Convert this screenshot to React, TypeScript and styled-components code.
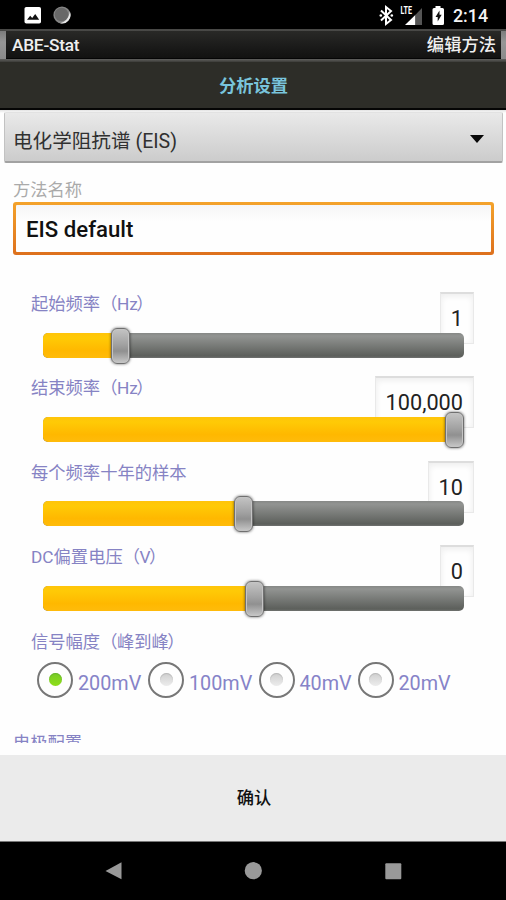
import React from "react";
import styled, { createGlobalStyle } from "styled-components";

const GlobalStyle = createGlobalStyle`
  *, *::before, *::after { box-sizing: border-box; }
  html, body { margin: 0; padding: 0; background: #000; }
  body { font-family: Roboto, "Noto Sans CJK SC", sans-serif; overflow: hidden; }
`;

const Screen = styled.div`
  display: flex;
  flex-direction: column;
  width: 506px;
  height: 900px;
  background: #fefefe;
  overflow: hidden;
`;

const StatusBar = styled.header`
  display: flex;
  flex: none;
  justify-content: space-between;
  height: 29px;
  background: #000;
  color: #f4f4f4;
`;

const TitleFrame = styled.div`
  flex: none;
  height: 33px;
  padding: 2px 0 3px;
  background: linear-gradient(#484846, #50504e 80%, #5c5c5a 92%, #3c3c39);
`;

const TitleSides = styled.div`
  height: 28px;
  padding: 0 5px 0 6px;
  background: linear-gradient(#7c7c7c, #969696 40%, #8a8a8a);
`;

const TitleBar = styled.div`
  display: flex;
  align-items: center;
  justify-content: space-between;
  height: 28px;
  padding: 0 5px 0 6px;
  border-bottom: 1px solid #050505;
  background: linear-gradient(#292927, #191918 65%, #121211);
  color: #efefef;
  font-weight: 500;
  line-height: 28px;
`;

const AppName = styled.span`
  font-size: 17.3px;
  letter-spacing: -0.25px;
`;

const ScreenName = styled.span`
  font-size: 17.3px;
`;

const SectionHeader = styled.h1`
  flex: none;
  height: 48px;
  margin: 0;
  padding: 1px 0 0 1px;
  border-bottom: 2px solid #050505;
  background: #2d2d28;
  color: #79c4dc;
  font-size: 17.3px;
  font-weight: 700;
  line-height: 46px;
  text-align: center;
`;

const Content = styled.main`
  display: flex;
  flex-direction: column;
  flex: none;
  height: 633px;
  padding-top: 2px;
  overflow: hidden;
  background: linear-gradient(#e2e2e2, #fefefe 3px);
`;

const Picker = styled.div`
  display: flex;
  flex: none;
  align-items: center;
  justify-content: space-between;
  height: 51px;
  margin: 0 3px 0 4px;
  padding: 4px 18px 0 8px;
  border: 1px solid #c2c2c2;
  border-top-color: #e2e2e2;
  border-bottom: 2px solid #a2a2a2;
  border-radius: 2px;
  background: linear-gradient(#e9e9e9, #cccccc);
  color: #303030;
  font-size: 19.6px;
`;

const FieldLabel = styled.label`
  flex: none;
  height: 39px;
  padding: 15px 0 0 13px;
  color: #aaaaaa;
  font-size: 17.3px;
  line-height: 25px;
`;

const NameFrame = styled.div`
  flex: none;
  height: 53px;
  margin: 0 12px 0 13px;
  padding: 3px;
  border-radius: 3px;
  background: linear-gradient(#f4a32b, #dd701d);
`;

const NameInput = styled.input`
  display: block;
  width: 100%;
  height: 47px;
  padding: 0 10px;
  border: 0;
  outline: 0;
  border-radius: 1px;
  background: linear-gradient(#f6f6f6, #fefefe 35%);
  color: #111;
  font: 500 22.2px Roboto, sans-serif;
`;

const Controls = styled.section`
  flex: none;
  padding: 37px 32px 0 31px;
`;

const SliderGroup = styled.div`
  height: 84.4px;
`;

const SliderHead = styled.div`
  display: flex;
  align-items: flex-start;
  justify-content: space-between;
  height: 40.5px;
`;

const PurpleLabel = styled.span`
  display: block;
  color: #8683c4;
  font-size: 17.3px;
  line-height: 24px;
`;

const OpenParen = styled.span`
  letter-spacing: -0.5px;
`;

const CloseParen = styled.span`
  margin-left: -1.6px;
`;

const ValueBox = styled.output`
  height: 52px;
  min-width: 34px;
  padding: 0 10px;
  border: 1px solid #e9e9e9;
  border-top: 2px solid #dddddd;
  background: #fefefe;
  box-shadow: inset 0 2px 6px #ececec;
  color: #222;
  font-size: 21.7px;
  line-height: 49px;
  text-align: right;
`;

const Track = styled.div`
  position: relative;
  height: 25px;
  margin: 0 10px 0 12px;
  border-radius: 5px;
  background: linear-gradient(#868886, #929492 12%, #5c5f5b 92%, #707270);
`;

const Fill = styled.div`
  height: 25px;
  border-radius: 5px 0 0 5px;
  background: linear-gradient(#ffc40a, #ffca06 20%, #ffb800 70%, #ffbb0b);
`;

const Thumb = styled.div`
  position: absolute;
  top: -5px;
  width: 19px;
  height: 36px;
  margin-left: -9.5px;
  border: 1px solid #707070;
  border-radius: 6px;
  background: linear-gradient(#c4c4c4, #a2a2a2 45%, #909090 65%, #c8c8c8);
  box-shadow: inset 0 0 0 1px #c4c4c4, 0 0 3px rgba(0, 0, 0, 0.6);
`;

const RadioHeading = styled.div`
  height: 32px;
`;

const RadioRow = styled.div`
  display: flex;
  padding-left: 6px;
`;

const RadioItem = styled.label<{ $width: number }>`
  display: flex;
  flex: none;
  align-items: center;
  gap: 5px;
  width: ${(p) => p.$width}px;
  height: 36px;
  color: #8683c8;
  font-size: 19.8px;
  white-space: nowrap;
`;

const RadioText = styled.span`
  padding-top: 7px;
`;

const RadioRing = styled.i`
  display: flex;
  flex: none;
  align-items: center;
  justify-content: center;
  width: 36px;
  height: 36px;
  border: 2px solid #777;
  border-radius: 50%;
  background: #fefefe;
`;

const RadioDot = styled.i<{ $on?: boolean }>`
  width: 13px;
  height: 13px;
  border-radius: 50%;
  background: ${(p) => (p.$on ? "linear-gradient(#78cc28, #8ede18)" : "linear-gradient(#cfcfcf, #ececec)")};
  box-shadow: inset 0 1px 1px ${(p) => (p.$on ? "#68b32c" : "#b8b8b8")};
`;

const NextHeading = styled.div`
  flex: none;
  height: 12px;
  margin-top: 33px;
  padding-left: 13px;
  overflow: hidden;
`;

const ConfirmButton = styled.button`
  flex: none;
  height: 87px;
  margin-top: 12px;
  padding: 0 0 3px 2px;
  border: 0;
  border-bottom: 1px solid #777;
  background: #ebebeb;
  color: #111;
  font: 500 17.3px Roboto, "Noto Sans CJK SC", sans-serif;
`;

const NavBar = styled.nav`
  flex: 1;
  background: #000;
`;

const SLIDERS = [
  { label: "起始频率", unit: "Hz", value: "1", at: 77.5 },
  { label: "结束频率", unit: "Hz", value: "100,000", at: 411.5 },
  { label: "每个频率十年的样本", value: "10", at: 200 },
  { label: "DC偏置电压", unit: "V", value: "0", at: 211.5 },
];

const RADIOS = [
  { label: "200mV", width: 111, on: true },
  { label: "100mV", width: 110.5, on: false },
  { label: "40mV", width: 99, on: false },
  { label: "20mV", width: 96, on: false },
];

function SettingLabel({ name, unit }: { name: string; unit?: string }) {
  return (
    <PurpleLabel>
      {name}
      {unit && (
        <>
          <OpenParen>（</OpenParen>
          {unit}
          <CloseParen>）</CloseParen>
        </>
      )}
    </PurpleLabel>
  );
}

function NotificationIcons() {
  return (
    <svg width="100" height="29" viewBox="0 0 100 29">
      <rect x="24.5" y="7" width="16.5" height="16.5" rx="1.8" fill="#fff" />
      <path d="M27 19.8l3.2-4 2 2.3 3-4.1 4 5.8z" fill="#111" />
      <circle cx="62" cy="15" r="8.6" fill="#858585" />
      <path d="M69.8 11.5A8.6 8.6 0 0 1 60 23.3C66.5 21.5 69 17 69.8 11.5z" fill="#e8e8e8" />
      <circle cx="61.5" cy="14.5" r="6.8" fill="#686868" />
    </svg>
  );
}

function SystemIcons() {
  return (
    <svg width="132" height="29" viewBox="374 0 132 29">
      <path d="M381 10.5l10 9.5-5 4V7l5 4-10 9.5" fill="none" stroke="#fff" strokeWidth="2" />
      <circle cx="380.8" cy="15.5" r="1.3" fill="#fff" />
      <circle cx="391.8" cy="15.5" r="1.3" fill="#fff" />
      <text x="400.5" y="14.3" fill="#fff" fontSize="10.5" fontWeight="700" textLength="11.5" lengthAdjust="spacingAndGlyphs">LTE</text>
      <path d="M405 25L415.5 14.7V25z" fill="#fff" />
      <path d="M415.5 14.7L422 8v17h-6.5z" fill="#555" />
      <path d="M435.5 6h5v2h2q1.5 0 1.5 1.5v14q0 1.5-1.5 1.5h-8.5q-1.5 0-1.5-1.5v-14Q432.5 8 434 8h1.5z" fill="#fff" />
      <path d="M439.5 10.5l-4 6.5h2.2v4.5l4-6.8h-2.2z" fill="#111" />
      <text x="453" y="22.3" fill="#f4f4f4" fontSize="18.2" fontWeight="500" textLength="35" lengthAdjust="spacingAndGlyphs">2:14</text>
    </svg>
  );
}

export default function App() {
  return (
    <>
      <GlobalStyle />
      <Screen>
        <StatusBar>
          <NotificationIcons />
          <SystemIcons />
        </StatusBar>
        <TitleFrame>
          <TitleSides>
            <TitleBar>
              <AppName>ABE-Stat</AppName>
              <ScreenName>编辑方法</ScreenName>
            </TitleBar>
          </TitleSides>
        </TitleFrame>
        <SectionHeader>分析设置</SectionHeader>
        <Content>
          <Picker>
            <span>电化学阻抗谱 (EIS)</span>
            <svg width="14" height="9" viewBox="0 0 14 9">
              <path d="M0 0h14L7 8z" fill="#080808" />
            </svg>
          </Picker>
          <FieldLabel htmlFor="method-name">方法名称</FieldLabel>
          <NameFrame>
            <NameInput id="method-name" defaultValue="EIS default" />
          </NameFrame>
          <Controls>
            {SLIDERS.map((s) => (
              <SliderGroup key={s.label}>
                <SliderHead>
                  <SettingLabel name={s.label} unit={s.unit} />
                  <ValueBox>{s.value}</ValueBox>
                </SliderHead>
                <Track>
                  <Fill style={{ width: s.at }} />
                  <Thumb style={{ left: s.at }} />
                </Track>
              </SliderGroup>
            ))}
            <RadioHeading>
              <SettingLabel name="信号幅度" unit="峰到峰" />
            </RadioHeading>
            <RadioRow>
              {RADIOS.map((r) => (
                <RadioItem key={r.label} $width={r.width}>
                  <RadioRing>
                    <RadioDot $on={r.on} />
                  </RadioRing>
                  <RadioText>{r.label}</RadioText>
                </RadioItem>
              ))}
            </RadioRow>
          </Controls>
          <NextHeading>
            <PurpleLabel>电极配置</PurpleLabel>
          </NextHeading>
        </Content>
        <ConfirmButton>确认</ConfirmButton>
        <NavBar>
          <svg width="506" height="58" viewBox="0 842 506 58">
            <path d="M105.5 871L121.5 862.3v17z" fill="#999" />
            <circle cx="253.3" cy="870.7" r="8.6" fill="#999" />
            <rect x="385.3" y="863.2" width="16" height="16" rx="1" fill="#999" />
          </svg>
        </NavBar>
      </Screen>
    </>
  );
}
